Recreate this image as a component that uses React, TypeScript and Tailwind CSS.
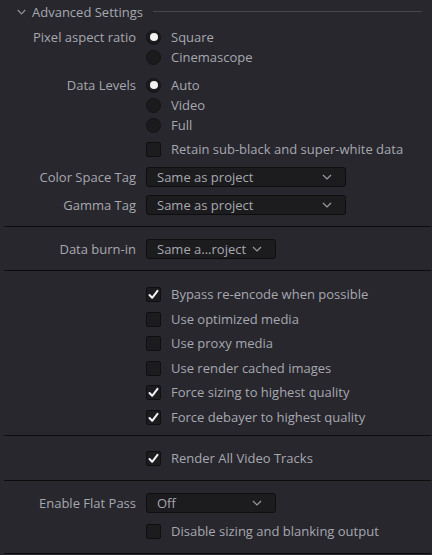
import React from "react";

const Radio = ({ on }: { on?: boolean }) => (
  <span className="w-[15px] h-[15px] rounded-full bg-[#1b1b1e] border border-[#141416] flex items-center justify-center shrink-0">
    {on && <span className="w-[8px] h-[8px] rounded-full bg-[#f2f2f2]" />}
  </span>
);

const Check = ({ on }: { on?: boolean }) => (
  <span className="w-[15px] h-[15px] rounded-[2px] bg-[#1c1c1f] border border-[#0f0f11] flex items-center justify-center shrink-0">
    {on && (
      <svg width="11" height="11" viewBox="0 0 11 11">
        <path d="M1.5 6 L4.2 8.8 L9.5 1.8" fill="none" stroke="#f4f4f4" strokeWidth="2" strokeLinecap="round" strokeLinejoin="round" />
      </svg>
    )}
  </span>
);

const Chevron = () => (
  <svg width="10" height="6" viewBox="0 0 10 6">
    <path d="M1 1 L5 5 L9 1" fill="none" stroke="#9a9ca3" strokeWidth="1.2" />
  </svg>
);

const Dropdown = ({ text, w }: { text: string; w: string }) => (
  <div className={`${w} h-[20px] rounded-[3px] bg-[#1c1c1f] border border-[#0e0e10] flex items-center justify-between pl-[10px] pr-[13px]`}>
    <span>{text}</span>
    <Chevron />
  </div>
);

const Row = ({ label, children, cls }: { label?: string; children: React.ReactNode; cls: string }) => (
  <div className={`flex items-center ${cls}`}>
    <div className="w-[136px] text-right shrink-0 leading-none">{label}</div>
    <div className="ml-[10px] flex items-center leading-none">{children}</div>
  </div>
);

const Opt = ({ children, label }: { children: React.ReactNode; label: string }) => (
  <>
    {children}
    <span className="ml-[10px]">{label}</span>
  </>
);

const Divider = ({ cls }: { cls: string }) => <div className={`h-px bg-[#0d0d0f] ml-[4px] mr-[1px] ${cls}`} />;

export default function App() {
  return (
    <div
      className="w-[432px] h-[555px] bg-[#28272d] text-[#a6a8b0] text-[13px] overflow-hidden flex flex-col"
      style={{ fontFamily: '"Open Sans", "Noto Sans", sans-serif' }}
    >
      <div className="h-[24px] flex items-center">
        <span className="ml-[17px] w-[9px] flex items-center">
          <svg width="9" height="6" viewBox="0 0 9 6">
            <path d="M0.8 1 L4.5 4.8 L8.2 1" fill="none" stroke="#8f929a" strokeWidth="1.2" />
          </svg>
        </span>
        <span className="ml-[6px] leading-none">Advanced Settings</span>
        <div className="ml-[10px] w-[269px] h-px bg-[#47464d] -mt-[2px]" />
      </div>

      <Row label="Pixel aspect ratio" cls="mt-[3px] h-[20px]"><Opt label="Square"><Radio on /></Opt></Row>
      <Row cls="h-[20px]"><Opt label="Cinemascope"><Radio /></Opt></Row>

      <Row label="Data Levels" cls="mt-[8px] h-[20px]"><Opt label="Auto"><Radio on /></Opt></Row>
      <Row cls="h-[20px]"><Opt label="Video"><Radio /></Opt></Row>
      <Row cls="h-[20px]"><Opt label="Full"><Radio /></Opt></Row>
      <Row cls="mt-[4px] h-[20px]"><Opt label="Retain sub-black and super-white data"><Check /></Opt></Row>

      <Row label="Color Space Tag" cls="mt-[8px] h-[20px]"><Dropdown text="Same as project" w="w-[200px]" /></Row>
      <Row label="Gamma Tag" cls="mt-[8px] h-[20px]"><Dropdown text="Same as project" w="w-[200px]" /></Row>

      <Divider cls="mt-[11px]" />
      <Row label="Data burn-in" cls="mt-[12px] h-[20px]"><Dropdown text="Same a...roject" w="w-[130px]" /></Row>
      <Divider cls="mt-[11px]" />

      <Row cls="mt-[13px] h-[20px]"><Opt label="Bypass re-encode when possible"><Check on /></Opt></Row>
      <Row cls="mt-[5px] h-[20px]"><Opt label="Use optimized media"><Check /></Opt></Row>
      <Row cls="mt-[4px] h-[20px]"><Opt label="Use proxy media"><Check /></Opt></Row>
      <Row cls="mt-[5px] h-[20px]"><Opt label="Use render cached images"><Check /></Opt></Row>
      <Row cls="mt-[4px] h-[20px]"><Opt label="Force sizing to highest quality"><Check on /></Opt></Row>
      <Row cls="mt-[5px] h-[20px]"><Opt label="Force debayer to highest quality"><Check on /></Opt></Row>

      <Divider cls="mt-[8px]" />
      <Row cls="mt-[12px] h-[20px]"><Opt label="Render All Video Tracks"><Check on /></Opt></Row>
      <Divider cls="mt-[12px]" />

      <Row label="Enable Flat Pass" cls="mt-[12px] h-[20px]"><Dropdown text="Off" w="w-[130px]" /></Row>
      <Row cls="mt-[8px] h-[20px]"><Opt label="Disable sizing and blanking output"><Check /></Opt></Row>
      <Divider cls="mt-[12px]" />
    </div>
  );
}
